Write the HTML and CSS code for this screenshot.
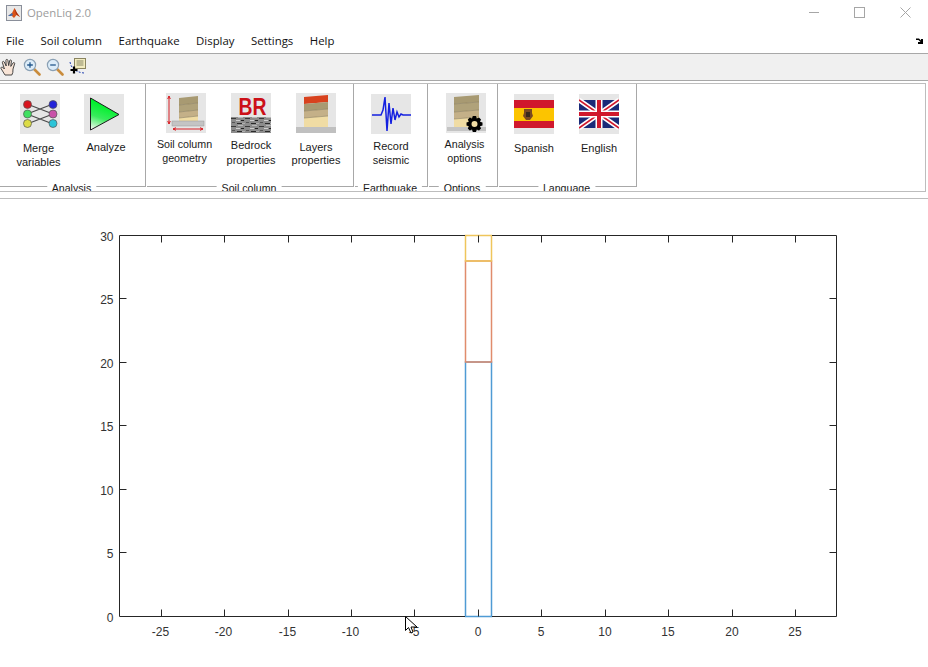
FILE: index.html
```html
<!DOCTYPE html>
<html lang="en">
<head>
<meta charset="utf-8">
<title>OpenLiq 2.0</title>
<link rel="stylesheet" href="styles.css">
</head>
<body>
<div class="window">
  <header class="titlebar">
    <svg class="app-icon" width="16" height="16" viewBox="0 0 16 16"><rect x="0.5" y="0.5" width="15" height="15" fill="#e8e8e8" stroke="#8a8f9a"/><path d="M2 11 6 8 8.5 3 11 8 14 12 10.5 10 8 13 5.5 10.5Z" fill="#d8531a"/><path d="M2 11 6 8 7 10 5 11Z" fill="#3a6fb5"/><path d="M8.5 3 11 8 14 12 10 9Z" fill="#a02c12"/></svg>
    <span class="app-title">OpenLiq 2.0</span>
    <div class="win-controls">
      <svg width="10" height="11" viewBox="0 0 10 11"><path d="M0 5.5H10" stroke="#a6a6a6"/></svg>
      <svg width="11" height="11" viewBox="0 0 11 11"><rect x="0.5" y="0.5" width="10" height="10" fill="none" stroke="#a6a6a6"/></svg>
      <svg width="11" height="11" viewBox="0 0 11 11"><path d="M0.5 0.5 10.5 10.5M10.5 0.5 0.5 10.5" stroke="#a6a6a6"/></svg>
    </div>
  </header>

  <nav class="menubar">
    <span>File</span><span>Soil column</span><span>Earthquake</span><span>Display</span><span>Settings</span><span>Help</span>
    <svg class="dock" width="7" height="6" viewBox="0 0 7 6"><path d="M0 0.5H3L5 2.5V1H7V6H2V4H4.5L2.5 2H0Z" fill="#000"/></svg>
  </nav>

  <div class="toolbar">
    <svg class="tb-icon" width="18" height="18" viewBox="0 0 18 18"><path d="M5 17 1 10.5C.5 9.3 2 8.6 2.8 9.4L4.4 11 2.4 4.6C2.1 3.3 3.7 2.9 4.3 4L6.2 8 5.9 2.4C5.9 1.1 7.7 1.1 7.9 2.4L8.7 7.6 9.7 2.6C10 1.5 11.5 1.8 11.4 3L10.8 8.4 13 5C13.8 4 15.1 4.8 14.6 5.9L13 11 12.8 14.5 11.8 17Z" fill="#f8e4d6" stroke="#333" stroke-width="0.9"/></svg>
    <svg class="tb-icon" width="18" height="18" viewBox="0 0 18 18"><path d="M10.5 10.5 16.5 16.5" stroke="#c98c3c" stroke-width="2.6" stroke-linecap="round"/><circle cx="7" cy="7" r="5.6" fill="#dcecf8" stroke="#8aa0b4" stroke-width="1.2"/><path d="M4.2 7H9.8M7 4.2V9.8" stroke="#24588c" stroke-width="1.3"/></svg>
    <svg class="tb-icon" width="18" height="18" viewBox="0 0 18 18"><path d="M10.5 10.5 16.5 16.5" stroke="#c98c3c" stroke-width="2.6" stroke-linecap="round"/><circle cx="7" cy="7" r="5.6" fill="#dcecf8" stroke="#8aa0b4" stroke-width="1.2"/><path d="M4.2 7H9.8" stroke="#24588c" stroke-width="1.3"/></svg>
    <svg class="tb-icon" width="18" height="18" viewBox="0 0 18 18"><path d="M1 4C2 9 5 14 15 15" fill="none" stroke="#2040b0" stroke-dasharray="2 1.5"/><rect x="5.5" y="0.5" width="11" height="10" fill="#f2ecc0" stroke="#8a8460"/><path d="M7.5 3H14.5M7.5 5H14.5M7.5 7H14.5" stroke="#8a8868"/><path d="M1.5 12H8.5M5 8.5V15.5" stroke="#000" stroke-width="2.2"/></svg>
  </div>

  <section class="ribbon">
    <div class="panel p-analysis">
      <div class="tool low">
        <svg class="icon" viewBox="0 0 40 40"><rect width="40" height="40" fill="#e6e6e6"/><path d="M7 10 33 20M7 20 33 10M7 20 33 30M7 30 33 20" stroke="#4a4a4a" stroke-width="1.3" fill="none"/><g stroke="#555" stroke-width="0.7"><circle cx="7.5" cy="10.5" r="4" fill="#d8141e"/><circle cx="7.5" cy="20" r="4" fill="#3fe060"/><circle cx="7.5" cy="29.5" r="4" fill="#dcdc46"/><circle cx="33" cy="10.5" r="4" fill="#2222d8"/><circle cx="33" cy="20" r="4" fill="#c850a8"/><circle cx="33" cy="29.5" r="4" fill="#2cc4d8"/></g></svg>
        <span class="label merge">Merge<br>variables</span>
      </div>
      <div class="tool low">
        <svg class="icon" viewBox="0 0 40 40"><defs><linearGradient id="play" x1="0.4" y1="0.2" x2="0.15" y2="1"><stop offset="0" stop-color="#00f02c"/><stop offset="0.5" stop-color="#38ec5c"/><stop offset="1" stop-color="#f4f8f0"/></linearGradient></defs><rect width="40" height="40" fill="#e6e6e6"/><path d="M6.5 4 35 20.5 6.5 36Z" fill="url(#play)" stroke="#1c1c1c"/></svg>
        <span class="label single">Analyze</span>
      </div>
      <span class="caption">Analysis</span>
    </div>

    <div class="panel p-soil">
      <div class="tool">
        <svg class="icon" viewBox="0 0 40 40"><rect width="40" height="40" fill="#e6e6e6"/><path d="M13 5 32 3V10L13 12Z" fill="#a89a72"/><path d="M13 12 32 10V17L13 19Z" fill="#b0a27a"/><path d="M13 19 32 17V23L13 25Z" fill="#c4b088"/><path d="M13 25 32 23V29H13Z" fill="#f0dca4"/><path d="M13 12 32 10M13 19 32 17M13 25 32 23" stroke="#8a7c5a" stroke-width="0.6"/><rect x="6" y="28" width="32" height="5" fill="#c4c4c4" stroke="#999" stroke-width="0.5"/><path d="M3 3V31M1.7 6 3 3 4.3 6M1.7 28 3 31 4.3 28M7 36H37M10 34.7 7 36 10 37.3M34 34.7 37 36 34 37.3" stroke="#d81e24" fill="none"/></svg>
        <span class="label soil shift">Soil column<br>geometry</span>
      </div>
      <div class="tool">
        <svg class="icon" viewBox="0 0 40 40"><defs><pattern id="rock" width="14" height="8" patternUnits="userSpaceOnUse"><rect width="14" height="8" fill="#8c8c8c"/><rect y="1" width="5" height="1" fill="#3a3a3a"/><rect x="7" y="0" width="5" height="1" fill="#b8b8b8"/><rect x="5" y="3" width="4" height="1" fill="#cfcfcf"/><rect x="10" y="3" width="3" height="1" fill="#222"/><rect x="1" y="5" width="3" height="1" fill="#555"/><rect x="6" y="6" width="5" height="1" fill="#2a2a2a"/><rect x="11" y="6" width="3" height="1" fill="#b0b0b0"/></pattern></defs><rect width="40" height="40" fill="#e6e6e6"/><rect y="24" width="40" height="16" fill="url(#rock)"/><text class="br" x="21.5" y="22" text-anchor="middle" textLength="28" lengthAdjust="spacingAndGlyphs">BR</text></svg>
        <span class="label bedrock">Bedrock<br>properties</span>
      </div>
      <div class="tool">
        <svg class="icon" viewBox="0 0 40 40"><rect width="40" height="40" fill="#e6e6e6"/><path d="M8 4 32 2V9L8 11Z" fill="#d8421e"/><path d="M8 11 32 9V16L8 18Z" fill="#a89a72"/><path d="M8 18 32 16V23L8 25Z" fill="#c4b088"/><path d="M8 25 32 23V34H8Z" fill="#f0dca4"/><path d="M8 18 32 16M8 25 32 23" stroke="#8a7c5a" stroke-width="0.6"/><rect y="34" width="40" height="6" fill="#c0c0c0"/></svg>
        <span class="label layers">Layers<br>properties</span>
      </div>
      <span class="caption">Soil column</span>
    </div>

    <div class="panel p-quake">
      <div class="tool low">
        <svg class="icon" viewBox="0 0 40 40"><rect width="40" height="40" fill="#e6e6e6"/><path d="M1 21H10L12 16 14 3 16 37 18 9 20 30 22 14 24 26 26 18 28 23 30 20 32 21H40" fill="none" stroke="#1420e0" stroke-width="1.5"/></svg>
        <span class="label record">Record<br>seismic</span>
      </div>
      <span class="caption">Earthquake</span>
    </div>

    <div class="panel p-options">
      <div class="tool">
        <svg class="icon" viewBox="0 0 40 40"><rect width="40" height="40" fill="#e6e6e6"/><path d="M8 4 33 2V9L8 11Z" fill="#a89a72"/><path d="M8 11 33 9V17L8 19Z" fill="#b0a27a"/><path d="M8 19 33 17V24L8 26Z" fill="#c4b088"/><path d="M8 26 33 24V34H8Z" fill="#f0dca4"/><path d="M8 11 33 9M8 19 33 17M8 26 33 24" stroke="#8a7c5a" stroke-width="0.6"/><rect x="1" y="34" width="39" height="4" fill="#c4c4c4"/><path d="M26 25.5 26.8 23 30 23 30.8 25.5 33 24.5 35 26.5 34 28.7 36.5 29.5V32.5L34 33.3 35 35.5 33 37.5 30.8 36.5 30 39H26.8L26 36.5 23.8 37.5 21.8 35.5 22.8 33.3 20.5 32.5V29.5L22.8 28.7 21.8 26.5 23.8 24.5ZM28.5 28A3 3 0 1 0 28.5 34 3 3 0 1 0 28.5 28Z" fill="#000" fill-rule="evenodd"/></svg>
        <span class="label soil shift">Analysis<br>options</span>
      </div>
      <span class="caption">Options</span>
    </div>

    <div class="panel p-lang">
      <div class="tool low">
        <svg class="icon" viewBox="0 0 40 40"><rect width="40" height="40" fill="#e6e6e6"/><rect y="6" width="40" height="28" fill="#d0182c"/><rect y="14" width="40" height="13" fill="#fcc400"/><path d="M10 15H18V19L19 22 16 26H12L9 22 10 19Z" fill="#7a4a22"/><rect x="12" y="18" width="4" height="5" fill="#3a2a1c"/></svg>
        <span class="label merge flagtext">Spanish</span>
      </div>
      <div class="tool low">
        <svg class="icon" viewBox="0 0 40 40"><rect width="40" height="40" fill="#e6e6e6"/><rect y="6" width="40" height="28" fill="#1a2a78"/><path d="M0 6 40 34M40 6 0 34" stroke="#fff" stroke-width="5"/><path d="M0 6 40 34M40 6 0 34" stroke="#d0182c" stroke-width="1.6"/><path d="M20 6V34M0 20H40" stroke="#fff" stroke-width="7"/><path d="M20 6V34M0 20H40" stroke="#d0182c" stroke-width="4"/></svg>
        <span class="label merge flagtext">English</span>
      </div>
      <span class="caption">Language</span>
    </div>
  </section>

  <div class="plot">
    <svg class="axes" width="928" height="468" viewBox="0 198 928 468">
      <g fill="none" stroke-width="1.5">
        <rect x="465.5" y="362" width="26" height="254.5" stroke="#4f9bd4"/>
        <rect x="465.5" y="261" width="26" height="101" stroke="#e08c6c"/>
        <rect x="465.5" y="235.5" width="26" height="25.5" stroke="#efc55c"/>
      </g>
      <path d="M119.5 235.5H465M492 235.5H836.5V616.5H492M465 616.5H119.5V235.5" fill="none" stroke="#262626"/>
      <path d="M161.5 616.5v-7M224.5 616.5v-7M288.5 616.5v-7M351.5 616.5v-7M414.5 616.5v-7M478.5 616.5v-7M541.5 616.5v-7M605.5 616.5v-7M668.5 616.5v-7M732.5 616.5v-7M795.5 616.5v-7
               M161.5 235.5v7M224.5 235.5v7M288.5 235.5v7M351.5 235.5v7M414.5 235.5v7M478.5 235.5v7M541.5 235.5v7M605.5 235.5v7M668.5 235.5v7M732.5 235.5v7M795.5 235.5v7
               M119.5 552.5h7M119.5 489.5h7M119.5 425.5h7M119.5 362.5h7M119.5 298.5h7
               M836.5 552.5h-7M836.5 489.5h-7M836.5 425.5h-7M836.5 362.5h-7M836.5 298.5h-7" stroke="#262626" fill="none"/>
      <g class="tick" text-anchor="middle">
        <text x="160.5" y="636">-25</text><text x="223.5" y="636">-20</text><text x="287.5" y="636">-15</text><text x="350.5" y="636">-10</text><text x="414" y="636">-5</text><text x="478" y="636">0</text><text x="541" y="636">5</text><text x="605" y="636">10</text><text x="668" y="636">15</text><text x="732" y="636">20</text><text x="795" y="636">25</text>
      </g>
      <g class="tick" text-anchor="end">
        <text x="113.5" y="622">0</text><text x="113.5" y="558">5</text><text x="113.5" y="495">10</text><text x="113.5" y="431">15</text><text x="113.5" y="368">20</text><text x="113.5" y="304">25</text><text x="113.5" y="241">30</text>
      </g>
    </svg>
    <svg class="cursor" width="13" height="21" viewBox="0 0 13 21"><path d="M0.5 0.5V14.5L3.5 11.5 6 17 8 16 6 11H12Z" fill="#fff" stroke="#000"/></svg>
  </div>
</div>
</body>
</html>
```

FILE: styles.css
```css
* { box-sizing: border-box; }
html, body { margin: 0; padding: 0; background: #fff; }

.window {
  width: 928px;
  height: 667px;
  overflow: hidden;
  display: flex;
  flex-direction: column;
  background: #fff;
  font-family: "Liberation Sans", Arial, sans-serif;
  color: #1a1a1a;
}

.titlebar {
  height: 27px;
  flex: none;
  display: flex;
  align-items: flex-start;
  padding: 5px 0 0 6px;
}
.app-icon { flex: none; }
.app-title {
  margin-left: 5px;
  font: 11.4px/16px "Open Sans", sans-serif;
  color: #9c9c9c;
}
.win-controls {
  margin-left: auto;
  margin-top: 2px;
  padding-right: 17px;
  display: flex;
  gap: 35px;
}

.menubar {
  height: 27px;
  flex: none;
  display: flex;
  align-items: center;
  gap: 16.5px;
  padding: 1px 5px 0 6px;
  border-bottom: 1px solid #a8a8a8;
  font: 11.4px/16px "Open Sans", sans-serif;
  color: #111;
}
.dock { margin-left: auto; margin-top: 0; }

.toolbar {
  height: 27px;
  flex: none;
  display: flex;
  align-items: center;
  gap: 5px;
  padding: 0 0 1px 0;
  background: #f0f0f0;
  border-bottom: 1px solid #a8a8a8;
}
.tb-icon { flex: none; }

.ribbon {
  margin-top: 2px;
  width: 926px;
  height: 109px;
  flex: none;
  display: flex;
  gap: 1px;
  border-top: 1px solid #bdbdbd;
  border-bottom: 1px solid #bdbdbd;
  border-right: 1px solid #bdbdbd;
  overflow: hidden;
}

.panel {
  position: relative;
  height: 103px;
  display: flex;
  border-right: 1px solid #a8a8a8;
  border-bottom: 1px solid #a8a8a8;
}
.p-analysis { width: 146px; padding-left: 20px; gap: 24px; }
.p-soil { width: 207px; padding-left: 19px; gap: 25px; }
.p-quake { width: 73px; padding-left: 16px; }
.p-options { width: 69px; padding-left: 17px; }
.p-lang { width: 138px; padding-left: 15px; gap: 25px; }

.tool {
  width: 40px;
  flex: none;
  display: flex;
  flex-direction: column;
  align-items: center;
  padding-top: 9px;
}
.tool.low { padding-top: 10px; }
.icon { width: 40px; height: 40px; flex: none; display: block; }

.label {
  font-size: 11px;
  line-height: 14px;
  white-space: nowrap;
  text-align: center;
  color: #1a1a1a;
}
.merge { margin-top: 7px; margin-left: -3px; }
.single { margin-top: 6px; margin-left: 4px; }
.soil { margin-top: 4px; font-size: 10.7px; }
.shift { margin-left: -3px; }
.bedrock { margin-top: 5px; line-height: 15px; }
.layers { margin-top: 8px; line-height: 13px; }
.record { margin-top: 5px; }
.flagtext { margin-left: 0; }

.caption {
  position: absolute;
  top: 97px;
  left: 50%;
  transform: translateX(-50%);
  margin-left: -1px;
  padding: 0 5px;
  background: #fff;
  font-size: 10.6px;
  line-height: 14px;
  white-space: nowrap;
  color: #1a1a1a;
}

.br {
  font-family: "Liberation Sans", Arial, sans-serif;
  font-size: 23.5px;
  font-weight: 700;
  fill: #cc1018;
}

.plot {
  position: relative;
  margin-top: 6px;
  flex: 1;
  border-top: 1px solid #bdbdbd;
}
.axes { display: block; margin-top: -1px; }
.tick text {
  font-family: "Liberation Sans", Arial, sans-serif;
  font-size: 12px;
  fill: #333;
}
.cursor {
  position: absolute;
  left: 405px;
  top: 417px;
}
```
